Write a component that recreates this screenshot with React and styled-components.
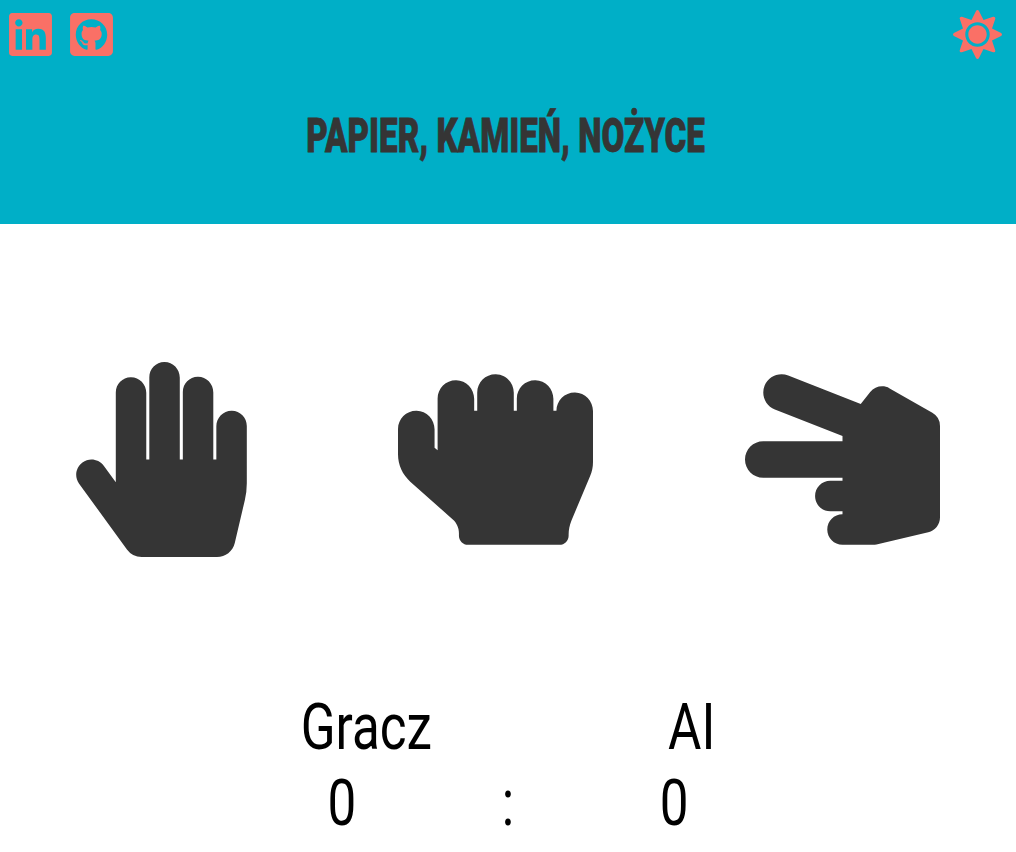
import styled, { createGlobalStyle } from "styled-components";
import { FaLinkedin, FaGithubSquare, FaSun, FaHandPaper, FaHandRock, FaHandScissors } from "react-icons/fa";

const GlobalStyle = createGlobalStyle`
  * {
    box-sizing: border-box;
  }
  body {
    margin: 0;
    background-color: #fff;
    font-family: "Roboto", "Liberation Sans", sans-serif;
  }
`;

const Header = styled.header`
  height: 224px;
  background-color: #00afc7;
  padding: 10px 14px 0 9px;
`;

const TopBar = styled.div`
  display: flex;
  justify-content: space-between;
  height: 49px;
`;

const Socials = styled.div`
  display: flex;
  gap: 18px;
`;

const IconLink = styled.a`
  display: block;
  height: 49px;
  color: #fa7066;
  line-height: 0;

  svg {
    width: ${({ $width }) => $width}px;
    height: 49px;
  }
`;

const Title = styled.h1`
  margin: 50px 0 0;
  color: #353535;
  font-size: 48px;
  line-height: 54px;
  font-weight: 900;
  text-align: center;
  text-transform: uppercase;
  white-space: nowrap;
  -webkit-text-stroke: 0.8px #353535;
  transform: scaleX(0.69);
`;

const Choices = styled.main`
  display: flex;
  justify-content: space-around;
  align-items: flex-start;
  padding-top: 138px;
  height: 466px;
`;

const Choice = styled.button`
  display: block;
  padding: 0;
  border: 0;
  background: none;
  color: #353535;
  line-height: 0;

  svg {
    width: ${({ $width }) => $width}px;
    height: 195px;
  }
`;

const Score = styled.section`
  color: #000;
  font-size: 64px;
  line-height: 76px;
  transform: scaleX(0.8);
`;

const ScoreRow = styled.div`
  display: flex;
  justify-content: center;
  gap: ${({ $gap }) => $gap}px;
`;

export default function App() {
  return (
    <>
      <GlobalStyle />
      <Header>
        <TopBar>
          <Socials>
            <IconLink href="#" $width={43}><FaLinkedin /></IconLink>
            <IconLink href="#" $width={43}><FaGithubSquare /></IconLink>
          </Socials>
          <IconLink href="#" $width={49}><FaSun /></IconLink>
        </TopBar>
        <Title>Papier, Kamień, Nożyce</Title>
      </Header>
      <Choices>
        <Choice $width={171}><FaHandPaper /></Choice>
        <Choice $width={195}><FaHandRock /></Choice>
        <Choice $width={195}><FaHandScissors /></Choice>
      </Choices>
      <Score>
        <ScoreRow $gap={295}><span>Gracz</span><span>AI</span></ScoreRow>
        <ScoreRow $gap={182}><span>0</span><span>:</span><span>0</span></ScoreRow>
      </Score>
    </>
  );
}
